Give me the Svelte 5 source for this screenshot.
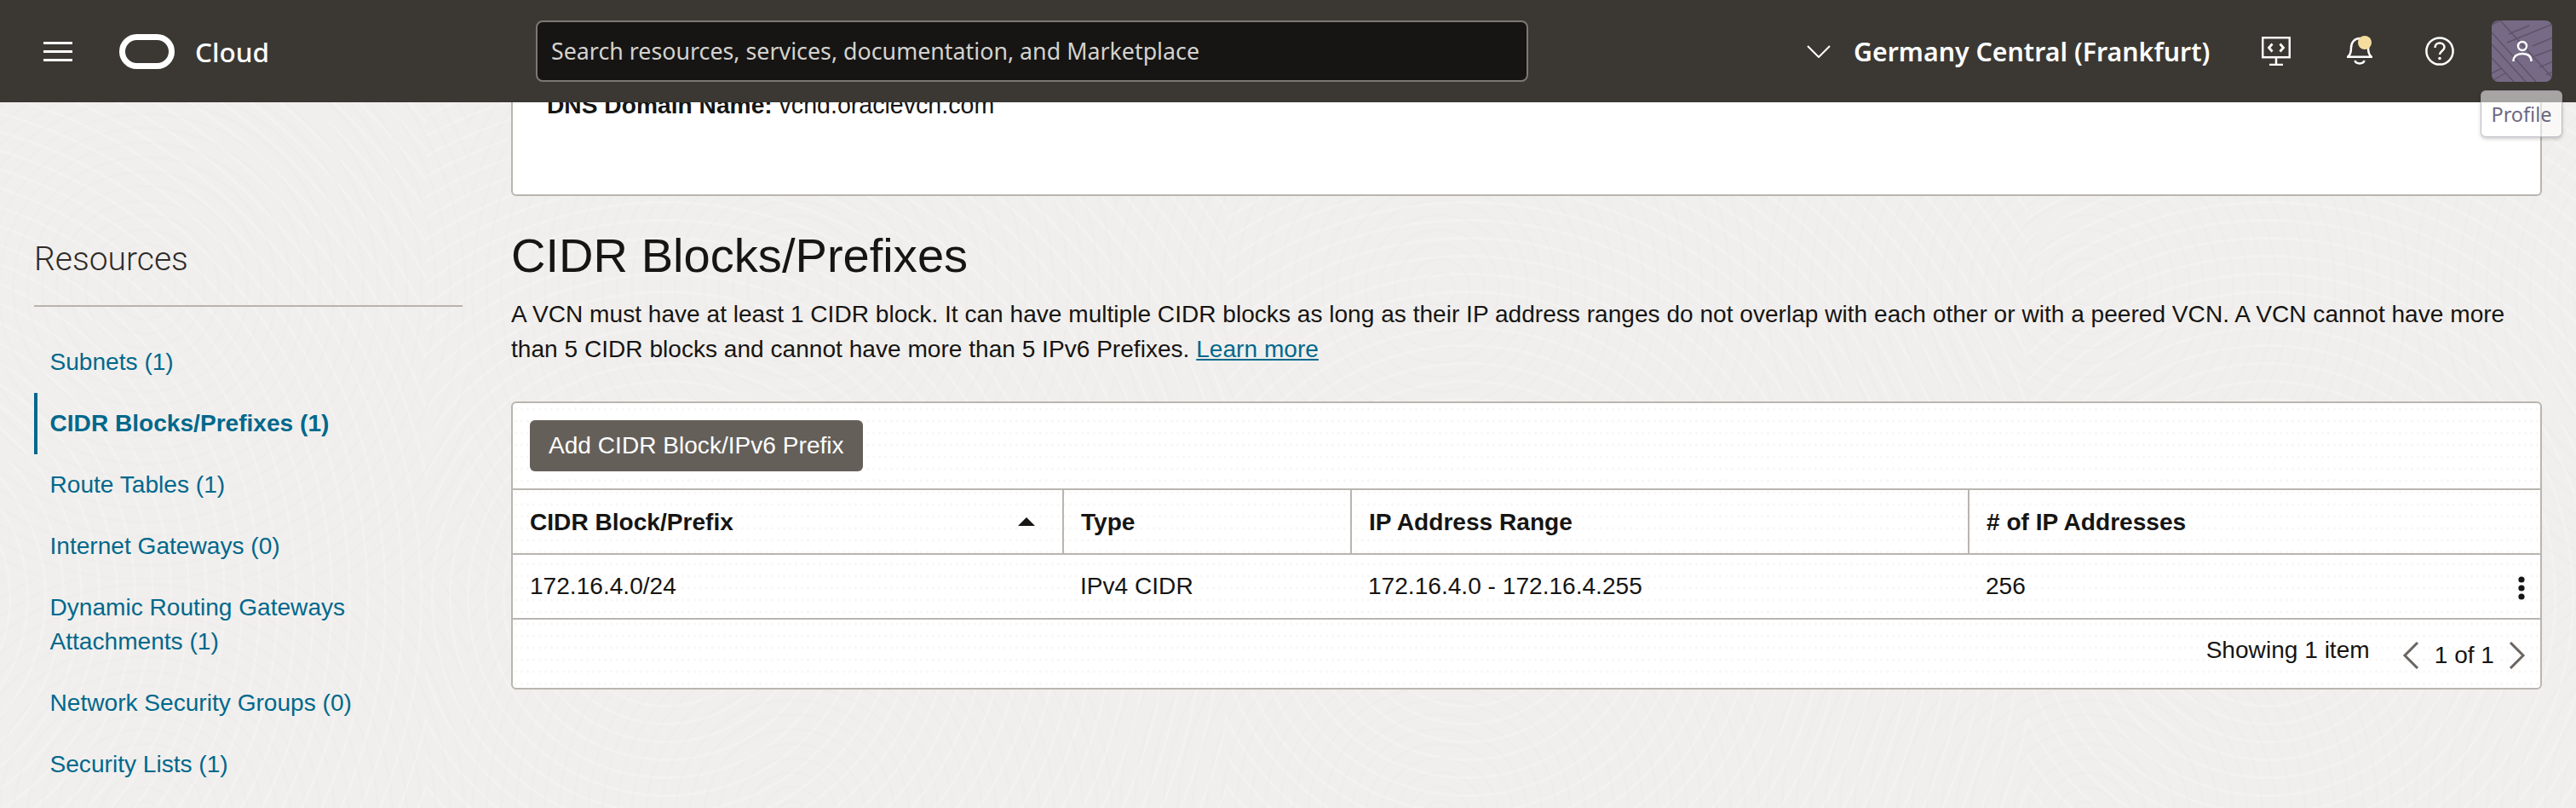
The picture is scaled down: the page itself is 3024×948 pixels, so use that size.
<script>
  const resources = [
    { label: "Subnets (1)" },
    { label: "CIDR Blocks/Prefixes (1)", active: true },
    { label: "Route Tables (1)" },
    { label: "Internet Gateways (0)" },
    { label: "Dynamic Routing Gateways Attachments (1)" },
    { label: "Network Security Groups (0)" },
    { label: "Security Lists (1)" },
  ];

  const columns = ["CIDR Block/Prefix", "Type", "IP Address Range", "# of IP Addresses"];
  const row = ["172.16.4.0/24", "IPv4 CIDR", "172.16.4.0 - 172.16.4.255", "256"];

  // stripes on the avatar tile
  const stripes = [
    "M14 -2 L-2 6", "M44 6 L20 16", "M72 4 L18 26", "M72 20 L48 30", "M72 34 L50 42", "M72 48 L56 55", "M72 60 L64 64",
    "M0 14 L52 72", "M0 28 L40 72", "M0 44 L26 72", "M10 0 L72 68", "M0 62 L12 56", "M2 70 L16 62",
  ];
</script>

<div class="page">
  <header class="topbar">
    <div class="brand">
      <button class="icon-btn menu" aria-label="Menu">
        <svg width="34" height="23" viewBox="0 0 34 23"><path d="M0 1.5h34M0 11.5h34M0 21.5h34" stroke="#fff" stroke-width="3" /></svg>
      </button>
      <svg class="logo" width="65" height="41" viewBox="0 0 65 41"><rect x="3.5" y="3.5" width="58" height="34" rx="17" fill="none" stroke="#fff" stroke-width="7" /></svg>
      <span class="cloud">Cloud</span>
    </div>

    <div class="search">Search resources, services, documentation, and Marketplace</div>

    <div class="region">
      <svg width="28" height="15" viewBox="0 0 28 15"><path d="M1 1l13 13L27 1" fill="none" stroke="#fff" stroke-width="2" /></svg>
      <span>Germany Central (Frankfurt)</span>
    </div>

    <div class="actions">
      <svg class="monitor" width="34" height="34" viewBox="0 0 34 34" fill="none" stroke="#fff" stroke-width="2.5">
        <rect x="1.2" y="1.2" width="31.6" height="23" />
        <path d="M17 25v7M9 33h16" />
        <path d="M12.5 8.500l-4 4.500 4 4.500M21.500 8.500l4 4.500-4 4.500" stroke-width="2.800" />
      </svg>
      <svg class="bell" width="30" height="35" viewBox="0 0 30 35" fill="none" stroke="#fff" stroke-width="2.500">
        <path d="M1 24.800h28c-3-2-4-4.800-4-10.800C25 8 21 3 15 3S5 8 5 14c0 6-1 8.800-4 10.800z" />
        <path d="M9.500 29c1 4.500 10 4.500 11 0" />
        <circle cx="21" cy="8" r="8" fill="#f5dd9e" stroke="none" />
      </svg>
      <svg class="help" width="34" height="34" viewBox="0 0 34 34" fill="none" stroke="#fff" stroke-width="2.500">
        <circle cx="17" cy="17" r="15.600" />
        <path d="M11.500 13c0-3.300 2.300-5.500 5.500-5.500s5.500 2.100 5.500 4.900c0 4.300-5.500 4.200-5.500 8.600" />
        <circle cx="17" cy="25.500" r="1.800" fill="#fff" stroke="none" />
      </svg>
      <div class="avatar">
        <svg class="stripes" width="71" height="72" viewBox="0 0 71 72" fill="none" stroke="#5d5468" stroke-width="1.400">
          {#each stripes as d}
            <path {d} />
          {/each}
        </svg>
        <svg class="person" width="24" height="26" viewBox="0 0 24 26" fill="none" stroke="#fff" stroke-width="2.400">
          <circle cx="12" cy="7" r="5" />
          <path d="M1.500 25c0-6 4-9 10.500-9s10.500 3 10.500 9" />
        </svg>
      </div>
    </div>
  </header>

  <div class="tooltip">Profile</div>

  <div class="body">
    <aside class="sidebar">
      <h2>Resources</h2>
      <ul>
        {#each resources as item}
          <li class:active={item.active}><a href="#top">{item.label}</a></li>
        {/each}
      </ul>
    </aside>

    <main class="content">
      <section class="panel">
        <p><strong>DNS Domain Name:</strong> <span class="value">vcnd.oraclevcn.com</span></p>
      </section>

      <h1>CIDR Blocks/Prefixes</h1>
      <p class="intro">
        A VCN must have at least 1 CIDR block. It can have multiple CIDR blocks as long as their IP address ranges do not overlap with each other or with a peered VCN. A VCN cannot have more than 5 CIDR blocks and cannot have more than 5 IPv6 Prefixes.
        <a href="#top">Learn more</a>
      </p>

      <section class="card">
        <div class="toolbar">
          <button class="primary">Add CIDR Block/IPv6 Prefix</button>
        </div>
        <table>
          <colgroup>
            <col class="c1" />
            <col class="c2" />
            <col class="c3" />
            <col />
          </colgroup>
          <thead>
            <tr>
              {#each columns as col, i}
                <th>
                  {col}
                  {#if i === 0}
                    <svg class="sort" width="20" height="10" viewBox="0 0 20 10"><path d="M10 0l10 10H0z" fill="#161513" /></svg>
                  {/if}
                </th>
              {/each}
            </tr>
          </thead>
          <tbody>
            <tr>
              {#each row as cell, i}
                <td>
                  {cell}
                  {#if i === 3}
                    <svg class="kebab" width="8" height="28" viewBox="0 0 8 28" fill="#161513">
                      <circle cx="4" cy="4" r="3.600" />
                      <circle cx="4" cy="14" r="3.600" />
                      <circle cx="4" cy="24" r="3.600" />
                    </svg>
                  {/if}
                </td>
              {/each}
            </tr>
          </tbody>
        </table>
        <div class="pager">
          <span class="count">Showing 1 item</span>
          <svg class="arrow" width="20" height="32" viewBox="0 0 20 32"><path d="M18 1L3 16l15 15" fill="none" stroke="#6b6560" stroke-width="3" /></svg>
          <span class="pages">1 of 1</span>
          <svg class="arrow" width="20" height="32" viewBox="0 0 20 32"><path d="M2 1l15 15L2 31" fill="none" stroke="#6b6560" stroke-width="3" /></svg>
        </div>
      </section>
    </main>
  </div>
</div>

<style>
  :global(body) {
    margin: 0;
    font-family: "Liberation Sans", Arial, sans-serif;
    color: #161513;
  }

  .page {
    position: relative;
    height: 948px;
    overflow: hidden;
    background-color: #f1efed;
    background-image:
      repeating-radial-gradient(circle at 50% 45%, rgba(0, 0, 0, 0.008) 0 3px, transparent 3px 17px),
      repeating-radial-gradient(circle at 30% 70%, rgba(255, 255, 255, 0.2) 0 3px, transparent 3px 21px);
    background-size: 760px 620px, 940px 830px;
    background-position: -210px 60px, 500px 120px;
  }

  .topbar {
    position: relative;
    z-index: 2;
    display: flex;
    align-items: center;
    height: 120px;
    background: #3b3833;
    color: #fff;
    font-family: "Noto Sans", sans-serif;
  }

  .brand {
    display: flex;
    flex: none;
    align-items: center;
    width: 629px;
    padding-left: 51px;
    box-sizing: border-box;
  }

  .icon-btn {
    display: flex;
    padding: 0;
    border: none;
    background: none;
  }

  .logo {
    margin-left: 55px;
  }

  .cloud {
    margin-left: 24px;
    font-size: 31.5px;
    font-weight: 500;
  }

  .search {
    flex: none;
    box-sizing: border-box;
    width: 1165px;
    height: 72px;
    padding-left: 16px;
    border: 2px solid #7c7873;
    border-radius: 8px;
    background: #161513;
    color: #d4d2cf;
    font-size: 26.800px;
    line-height: 68px;
  }

  .region {
    display: flex;
    flex: none;
    align-items: center;
    gap: 27px;
    margin-left: 327px;
    font-size: 30.300px;
    font-weight: 600;
    white-space: nowrap;
  }

  .region span {
    display: block;
    width: 419px;
  }

  .actions {
    display: flex;
    flex: none;
    align-items: center;
    margin-left: 60px;
  }

  .bell {
    margin-left: 66px;
    margin-top: -1px;
  }

  .help {
    margin-left: 62px;
  }

  .avatar {
    position: relative;
    display: flex;
    align-items: center;
    justify-content: center;
    width: 71px;
    height: 72px;
    margin-left: 44px;
    border-radius: 8px;
    overflow: hidden;
    background: #766a86;
  }

  .stripes {
    position: absolute;
    top: 0;
    left: 0;
  }

  .person {
    position: relative;
  }

  .tooltip {
    position: absolute;
    z-index: 3;
    top: 106px;
    left: 2912px;
    box-sizing: border-box;
    width: 96px;
    height: 55px;
    border: 1px solid rgba(150, 145, 160, 0.6);
    border-radius: 6px;
    background: rgba(255, 255, 255, 0.55);
    box-shadow: 0 2px 4px rgba(0, 0, 0, 0.2);
    color: #6d6880;
    font-family: "Noto Sans", sans-serif;
    font-size: 23.500px;
    line-height: 54px;
    text-align: center;
  }

  .body {
    display: grid;
    grid-template-columns: 600px 1fr;
    height: 828px;
  }

  .sidebar {
    padding: 161px 57px 0 40px;
  }

  h2 {
    margin: 0;
    padding-bottom: 31px;
    border-bottom: 2px solid #b9b3ac;
    color: #2e2b28;
    font-family: Roboto, "Liberation Sans", sans-serif;
    font-size: 39px;
    font-weight: 300;
    line-height: 46px;
  }

  ul {
    margin: 29px 0 0;
    padding: 0;
    list-style: none;
  }

  li {
    padding: 16px 60px 16px 14.500px;
    border-left: 4px solid transparent;
    font-size: 28.100px;
    line-height: 40px;
  }

  li.active {
    border-left-color: #00688c;
    font-weight: 700;
  }

  li a {
    color: #00688c;
    text-decoration: none;
  }

  .content {
    padding-right: 40px;
    overflow: hidden;
  }

  .panel {
    box-sizing: border-box;
    height: 150px;
    margin-top: -40px;
    padding: 23px 40px;
    border: 2px solid #b9b5b0;
    border-top: none;
    border-radius: 6px;
    background: #fff;
    font-size: 28.200px;
    line-height: 40px;
  }

  .panel p {
    margin: 0;
  }

  .value {
    font-size: 28.600px;
  }

  h1 {
    margin: 36px 0 0;
    font-size: 56.100px;
    font-weight: 400;
    line-height: 68px;
  }

  .intro {
    margin: 15px 0 0;
    font-size: 28.100px;
    line-height: 40.500px;
  }

  .intro a {
    color: #00688c;
  }

  .card {
    margin-top: 41px;
    border: 2px solid #b9b5b0;
    border-radius: 6px;
    background: #fff;
    background-image: radial-gradient(#f8f7f6 1px, transparent 1.200px);
    background-size: 7px 14px;
  }

  .toolbar {
    padding: 20px;
  }

  .primary {
    display: block;
    height: 60px;
    padding: 0 22px;
    border: none;
    border-radius: 6px;
    background: #655f5a;
    color: #fff;
    font: 28.100px "Liberation Sans", Arial, sans-serif;
  }

  table {
    width: 100%;
    border-collapse: collapse;
    table-layout: fixed;
  }

  .c1 {
    width: 646px;
  }

  .c2 {
    width: 338px;
  }

  .c3 {
    width: 725px;
  }

  th,
  td {
    height: 74px;
    padding: 0 20px;
    border-top: 2px solid #b9b5b0;
    border-bottom: 2px solid #b9b5b0;
    font-size: 28.100px;
    text-align: left;
  }

  th {
    position: relative;
    padding-top: 2px;
    height: 72px;
    border-left: 2px solid #b9b5b0;
    font-weight: 700;
  }

  th:first-child {
    border-left: none;
  }

  td {
    position: relative;
    font-weight: 400;
  }

  .sort {
    position: absolute;
    top: 32px;
    right: 32px;
  }

  .kebab {
    position: absolute;
    top: 25px;
    right: 18px;
  }

  .pager {
    display: flex;
    align-items: center;
    justify-content: flex-end;
    height: 80px;
    padding-right: 17px;
    font-size: 28.100px;
  }

  .count {
    margin-right: 38px;
    padding-bottom: 8px;
  }

  .arrow {
    margin-top: 4px;
  }

  .pages {
    margin: 0 17px 0 18px;
    padding-top: 4px;
  }
</style>
